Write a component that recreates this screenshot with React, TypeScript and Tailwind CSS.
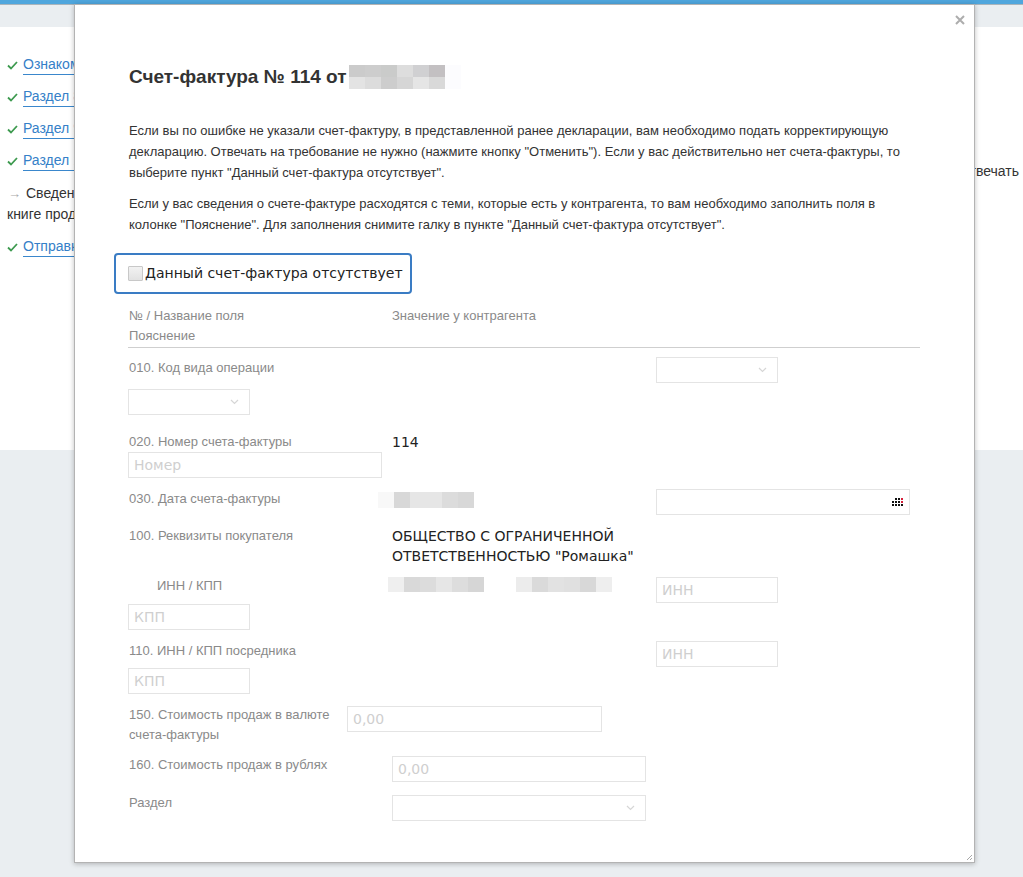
import React from "react";

const arial = { fontFamily: '"Liberation Sans", Arial, sans-serif' };

function Check() {
  return (
    <svg width="11" height="9" viewBox="0 0 11 9" className="shrink-0">
      <path d="M1 4.5 L4 7.5 L10 1" fill="none" stroke="#3d9a4f" strokeWidth="1.8" />
    </svg>
  );
}

function Blur({ cells, h = 8 }: { cells: string[][]; h?: number }) {
  return (
    <div className="flex flex-col">
      {cells.map((row, i) => (
        <div key={i} className="flex">
          {row.map((c, j) => (
            <div key={j} className="w-[16px]" style={{ background: c, height: h }} />
          ))}
        </div>
      ))}
    </div>
  );
}

function Chevron() {
  return (
    <svg width="9" height="6" viewBox="0 0 9 6">
      <path d="M1 1 L4.5 4.5 L8 1" fill="none" stroke="#d6d6d6" strokeWidth="1.2" />
    </svg>
  );
}

function Select({ w }: { w: string }) {
  return (
    <div className={`${w} h-[26px] border border-[#e4e4e4] bg-white flex items-center justify-end pr-[10px]`}>
      <Chevron />
    </div>
  );
}

function Input({ w, ph }: { w: string; ph: string }) {
  return (
    <div
      className={`${w} h-[26px] border border-[#e4e4e4] bg-white flex items-center pl-[5px] text-[14px] text-[#cfcfcf]`}
      style={{ fontFamily: '"DejaVu Sans", Verdana, sans-serif' }}
    >
      {ph}
    </div>
  );
}

function Label({ children, className = "" }: { children: React.ReactNode; className?: string }) {
  return <div className={`text-[13px] leading-[20px] text-[#8a8a8a] ${className}`}>{children}</div>;
}

function Link({ t }: { t: string }) {
  return (
    <div className="h-[32px] flex items-start pl-[7px] gap-[5px]">
      <div className="h-[20px] flex items-center"><Check /></div>
      <span className="leading-[19px] text-[#3580c8] border-b border-[#3a87cc]">{t}</span>
    </div>
  );
}

export default function App() {
  return (
    <div className="relative w-[1023px] h-[877px] overflow-hidden bg-[#eaeef1]" style={arial}>
      {/* background page */}
      <div className="h-[4px] bg-[#4fa6dd]" />
      <div className="h-[1px] bg-[#a9b4bb]" />
      <div className="h-[22px] bg-[#eaeef1]" />
      <div className="h-[423px] bg-white pt-[28px] text-[14px]">
        <div className="flex flex-col">
          <Link t="Ознакомьтесь" />
          <Link t="Раздел 8" />
          <Link t="Раздел 9" />
          <div className="h-[32px] flex items-start justify-between">
            <Link t="Раздел 10" />
            <span className="mt-[10px] leading-[20px] text-[#333] pr-[4px]">твечать</span>
          </div>
          <div className="pl-[7px] leading-[20px] text-[#333]">
            <span className="text-[#aaa] text-[13px] mr-[5px] ml-[1px]">→</span>Сведения
          </div>
          <div className="pl-[7px] leading-[20px] text-[#333] h-[33px]">книге продаж</div>
          <Link t="Отправка" />
        </div>
      </div>

      {/* modal */}
      <div className="absolute left-[74px] top-[4px] w-[901px] h-[859px] bg-white border border-[#b3b3b3] shadow-[0_1px_5px_rgba(0,0,0,0.25)]">
        <div className="absolute right-[8px] top-[9px] w-[12px] h-[12px] flex items-center justify-center">
          <svg width="10" height="10" viewBox="0 0 10 10">
            <path d="M1 1 L9 9 M9 1 L1 9" stroke="#adadad" strokeWidth="2" />
          </svg>
        </div>
        <div className="absolute right-[1px] bottom-[1px]">
          <svg width="8" height="8" viewBox="0 0 8 8">
            <path d="M7 2 L2 7 M7 5 L5 7" stroke="#a8a8a8" strokeWidth="1" />
          </svg>
        </div>

        <div className="pt-[59px] pl-[53px] pr-[54px]">
          {/* title */}
          <div className="flex items-center h-[26px]">
            <h1 className="text-[19px] font-bold text-[#333] leading-[26px] ml-[1px]">Счет-фактура № 114 от</h1>
            <div className="ml-[2px] flex items-center">
              <Blur
                h={12}
                cells={[
                  ["#cbcbcb", "#cdcdcd", "#cacbca", "#dddddd", "#d0d0d2", "#c3c0c2", "#fcfcfe"],
                  ["#e3e3e3", "#dcdcdc", "#cdcdcd", "#d6d6d6", "#e5e5e5", "#d9d9d9", "#fcfcfe"],
                ]}
              />
            </div>
          </div>

          {/* paragraphs */}
          <div className="mt-[30px] text-[13px] leading-[21px] text-[#333] ml-[1px] whitespace-nowrap">
            <p>
              Если вы по ошибке не указали счет-фактуру, в представленной ранее декларации, вам необходимо подать корректирующую
              <br />
              декларацию. Отвечать на требование не нужно (нажмите кнопку "Отменить"). Если у вас действительно нет счета-фактуры, то
              <br />
              выберите пункт "Данный счет-фактура отсутствует".
            </p>
            <p className="mt-[10px]">
              Если у вас сведения о счете-фактуре расходятся с теми, которые есть у контрагента, то вам необходимо заполнить поля в
              <br />
              колонке "Пояснение". Для заполнения снимите галку в пункте "Данный счет-фактура отсутствует".
            </p>
          </div>

          {/* checkbox */}
          <div className="mt-[18px] -ml-[14px] w-[298px] h-[41px] border-2 border-[#3a7cc4] rounded-[4px] flex items-center pl-[12px]">
            <div className="w-[15px] h-[15px] border border-[#c8c8c8] bg-gradient-to-b from-[#f2f2f2] to-[#e2e2e2] rounded-[1px]" />
            <span
              className="ml-[2px] text-[14px] text-[#222]"
              style={{ fontFamily: '"DejaVu Sans", Verdana, sans-serif' }}
            >
              Данный счет-фактура отсутствует
            </span>
          </div>

          {/* header */}
          <div className="mt-[12px] border-b border-[#cfcfcf] pb-[1px]">
            <div className="flex">
              <Label className="w-[264px] pl-[1px]">№ / Название поля</Label>
              <Label>Значение у контрагента</Label>
            </div>
            <Label className="pl-[1px]">Пояснение</Label>
          </div>

          {/* row 010 */}
          <div className="mt-[9px]">
            <div className="flex items-start">
              <Label className="w-[264px] pl-[1px] pt-[1px]">010. Код вида операции</Label>
              <div className="w-[264px]" />
              <div className="mt-[0px]"><Select w="w-[122px]" /></div>
            </div>
            <div className="mt-[6px]"><Select w="w-[122px]" /></div>
          </div>

          {/* row 020 */}
          <div className="mt-[16px]">
            <div className="flex items-start">
              <Label className="w-[264px] pl-[1px] pt-[1px]">020. Номер счета-фактуры</Label>
              <div className="text-[14px] leading-[20px] pt-[1px] text-[#222]" style={{ fontFamily: '"DejaVu Sans", Verdana, sans-serif' }}>114</div>
            </div>
            <div className="mt-[0px]"><Input w="w-[254px]" ph="Номер" /></div>
          </div>

          {/* row 030 */}
          <div className="mt-[10px] flex items-start">
            <Label className="w-[250px] pl-[1px] pt-[1px]">030. Дата счета-фактуры</Label>
            <div className="w-[278px] pt-[4px]">
              <Blur h={16} cells={[["#f8f8f8", "#d8d8d8", "#e6e6e6", "#e6e6e6", "#dcdcdc", "#d8d8d8"]]} />
            </div>
            <div className="mt-[1px] w-[254px] h-[26px] border border-[#e4e4e4] flex items-center justify-end pr-[5px]">
              <svg width="12" height="9" viewBox="0 0 12 9">
                <rect x="3" y="0" width="2" height="2" fill="#111" />
                <rect x="6" y="0" width="2" height="2" fill="#111" />
                <rect x="9" y="0" width="2" height="2" fill="#d61f3a" />
                <rect x="0" y="3" width="2" height="2" fill="#111" />
                <rect x="3" y="3" width="2" height="2" fill="#111" />
                <rect x="6" y="3" width="2" height="2" fill="#111" />
                <rect x="9" y="3" width="2" height="2" fill="#d61f3a" />
                <rect x="0" y="6" width="2" height="2" fill="#111" />
                <rect x="3" y="6" width="2" height="2" fill="#111" />
                <rect x="6" y="6" width="2" height="2" fill="#111" />
                <rect x="9" y="6" width="2" height="2" fill="#111" />
              </svg>
            </div>
          </div>

          {/* row 100 */}
          <div className="mt-[10px]">
            <div className="flex items-start">
              <Label className="w-[264px] pl-[1px] pt-[1px]">100. Реквизиты покупателя</Label>
              <div className="text-[14px] leading-[20px] pt-[1px] text-[#222]" style={{ fontFamily: '"DejaVu Sans", Verdana, sans-serif' }}>
                ОБЩЕСТВО С ОГРАНИЧЕННОЙ
                <br />
                ОТВЕТСТВЕННОСТЬЮ "Ромашка"
              </div>
            </div>
            <div className="mt-[9px] flex items-start">
              <Label className="w-[260px] pl-[29px] pt-[1px]">ИНН / КПП</Label>
              <div className="pt-[2px] w-[128px]">
                <Blur h={15} cells={[["#efefef", "#d9d9d9", "#dcdcdc", "#e6e6e6", "#dddddd", "#d6d6d6"]]} />
              </div>
              <div className="pt-[2px] w-[140px]">
                <Blur h={15} cells={[["#ececec", "#dadada", "#e2e2e2", "#e0e0e0", "#d8d8d8", "#eeeeee"]]} />
              </div>
              <div className="mt-[2px]"><Input w="w-[122px]" ph="ИНН" /></div>
            </div>
            <div className="mt-[1px]"><Input w="w-[122px]" ph="КПП" /></div>
          </div>

          {/* row 110 */}
          <div className="mt-[10px]">
            <div className="flex items-start">
              <Label className="w-[528px] pl-[1px] pt-[1px]">110. ИНН / КПП посредника</Label>
              <div className="mt-[1px]"><Input w="w-[122px]" ph="ИНН" /></div>
            </div>
            <div className="mt-[1px]"><Input w="w-[122px]" ph="КПП" /></div>
          </div>

          {/* row 150 */}
          <div className="mt-[10px] flex items-start">
            <Label className="w-[219px] pl-[1px] pt-[1px]">
              150. Стоимость продаж в валюте
              <br />
              счета-фактуры
            </Label>
            <div className="mt-[2px]"><Input w="w-[255px]" ph="0,00" /></div>
          </div>

          {/* row 160 */}
          <div className="mt-[9px] flex items-start">
            <Label className="w-[264px] pl-[1px] pt-[1px]">160. Стоимость продаж в рублях</Label>
            <div className="mt-[2px]"><Input w="w-[254px]" ph="0,00" /></div>
          </div>

          {/* Раздел */}
          <div className="mt-[10px] flex items-start">
            <Label className="w-[264px] pl-[1px] pt-[1px]">Раздел</Label>
            <div className="mt-[3px]"><Select w="w-[254px]" /></div>
          </div>
        </div>
      </div>
    </div>
  );
}
